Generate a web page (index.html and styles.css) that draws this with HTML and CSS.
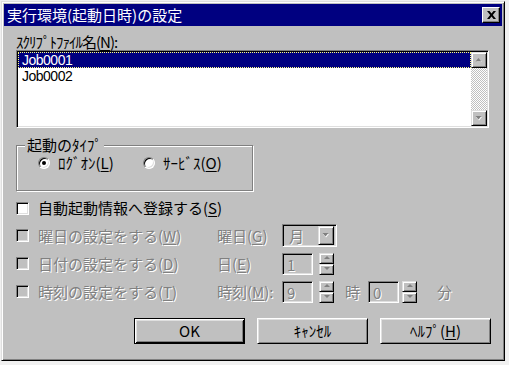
FILE: index.html
```html
<!DOCTYPE html>
<html lang="ja">
<head>
    <meta charset="UTF-8">
    <meta name="viewport" content="width=device-width, initial-scale=1.0">
    <title>実行環境(起動日時)の設定</title>
    <link rel="stylesheet" href="styles.css">
</head>
<body>
    <div class="window">
        <div class="titlebar">
            <span class="title">実行環境(起動日時)の設定</span>
            <span class="close-btn">
                <svg width="9" height="8" viewBox="0 0 9 8"><path d="M0 0h2.5l2 2.6L6.5 0H9L5.8 4 9 8H6.5l-2-2.6L2.5 8H0l3.2-4z" fill="#000"/></svg>
            </span>
        </div>
        <div class="dialog-body">
            <div class="field-label">ｽｸﾘﾌﾟﾄﾌｧｲﾙ名(<u>N</u>):</div>
            <div class="listbox">
                <ul class="list-items">
                    <li class="selected">Job0001</li>
                    <li>Job0002</li>
                </ul>
                <div class="scrollbar">
                    <span class="bevel scroll-btn">
                        <svg width="8" height="5" viewBox="0 0 8 5"><path d="M4 1l3 3H1z" fill="#fff"/><path d="M3.5 0l3 3.5h-6z" fill="#808080"/></svg>
                    </span>
                    <span class="scroll-track"></span>
                    <span class="bevel scroll-btn">
                        <svg width="8" height="5" viewBox="0 0 8 5"><path d="M1 1h6L4 4.5z" fill="#fff"/><path d="M0.5 0h6l-3 3.5z" fill="#808080"/></svg>
                    </span>
                </div>
            </div>

            <div class="group">
                <div class="group-title">起動のﾀｲﾌﾟ</div>
                <div class="radio-row">
                    <label class="radio-item logon"><span class="radio checked"></span><span>ﾛｸﾞｵﾝ(<u>L</u>)</span></label>
                    <label class="radio-item"><span class="radio"></span><span>ｻｰﾋﾞｽ(<u>O</u>)</span></label>
                </div>
            </div>

            <label class="check-row"><span class="checkbox"></span><span>自動起動情報へ登録する(<u>S</u>)</span></label>

            <div class="schedule">
                <div class="check-cell"><span class="checkbox off"></span><span class="disabled">曜日の設定をする(<u>W</u>)</span></div>
                <div class="disabled">曜日(<u>G</u>)</div>
                <div class="controls">
                    <div class="sunken combo">
                        <span class="disabled">月</span>
                        <span class="bevel drop-btn">
                            <svg width="8" height="5" viewBox="0 0 8 5"><path d="M1 1h6L4 4.5z" fill="#fff"/><path d="M0.5 0h6l-3 3.5z" fill="#808080"/></svg>
                        </span>
                    </div>
                </div>

                <div class="check-cell"><span class="checkbox off"></span><span class="disabled">日付の設定をする(<u>D</u>)</span></div>
                <div class="disabled">日(<u>E</u>)</div>
                <div class="controls">
                    <div class="sunken edit disabled">1</div>
                    <div class="spin gap-wide">
                        <span class="bevel spin-btn"><svg width="6" height="4" viewBox="0 0 6 4"><path d="M3 0l3 3H0z" fill="#808080"/></svg></span>
                        <span class="bevel spin-btn"><svg width="6" height="4" viewBox="0 0 6 4"><path d="M0 0h6L3 3z" fill="#808080"/></svg></span>
                    </div>
                </div>

                <div class="check-cell"><span class="checkbox off"></span><span class="disabled">時刻の設定をする(<u>T</u>)</span></div>
                <div class="disabled">時刻(<u>M</u>):</div>
                <div class="controls">
                    <div class="sunken edit disabled">9</div>
                    <div class="spin gap-wide">
                        <span class="bevel spin-btn"><svg width="6" height="4" viewBox="0 0 6 4"><path d="M3 0l3 3H0z" fill="#808080"/></svg></span>
                        <span class="bevel spin-btn"><svg width="6" height="4" viewBox="0 0 6 4"><path d="M0 0h6L3 3z" fill="#808080"/></svg></span>
                    </div>
                    <span class="disabled unit-hour">時</span>
                    <div class="sunken edit disabled">0</div>
                    <div class="spin gap-narrow">
                        <span class="bevel spin-btn"><svg width="6" height="4" viewBox="0 0 6 4"><path d="M3 0l3 3H0z" fill="#808080"/></svg></span>
                        <span class="bevel spin-btn"><svg width="6" height="4" viewBox="0 0 6 4"><path d="M0 0h6L3 3z" fill="#808080"/></svg></span>
                    </div>
                    <span class="disabled unit-min">分</span>
                </div>
            </div>

            <div class="buttons">
                <button class="btn default">OK</button>
                <button class="btn">ｷｬﾝｾﾙ</button>
                <button class="btn">ﾍﾙﾌﾟ(<u>H</u>)</button>
            </div>
        </div>
    </div>
</body>
</html>
```

FILE: styles.css
```css
body {
    margin: 0;
    background-color: #f0f0f0;
    font-family: "Noto Sans CJK JP", "Noto Sans", sans-serif;
    font-size: 15px;
    line-height: 16px;
    color: #000;
}

u {
    text-decoration-thickness: 1px;
    text-underline-offset: 2px;
}

.window {
    margin: 1px 0 0 1px;
    width: 504px;
    height: 360px;
    box-sizing: border-box;
    padding: 2px;
    background-color: #c0c0c0;
    border: 1px solid;
    border-color: #dfdfdf #000 #000 #dfdfdf;
    box-shadow: inset 1px 1px #fff, inset -1px -1px #808080;
}

/* shared 3d looks */
.bevel {
    box-sizing: border-box;
    background-color: #c0c0c0;
    border: 1px solid;
    border-color: #dfdfdf #000 #000 #dfdfdf;
    box-shadow: inset 1px 1px #fff, inset -1px -1px #808080;
    display: flex;
    align-items: center;
    justify-content: center;
}

.sunken {
    box-sizing: border-box;
    border: 1px solid;
    border-color: #808080 #fff #fff #808080;
    box-shadow: inset 1px 1px #000, inset -1px -1px #dfdfdf;
}

.disabled {
    color: #808080;
    text-shadow: 1px 1px 0 #fff;
}

/* title bar */
.titlebar {
    height: 22px;
    background-color: #000080;
    display: flex;
    align-items: center;
    justify-content: space-between;
    padding: 0 2px 0 3px;
}

.title {
    color: #fff;
    font-size: 15px;
    line-height: 20px;
}

.close-btn {
    width: 18px;
    height: 16px;
    box-sizing: border-box;
    background-color: #c0c0c0;
    border: 1px solid;
    border-color: #fff #000 #000 #fff;
    box-shadow: inset -1px -1px #808080;
    display: flex;
    align-items: center;
    justify-content: center;
}

.dialog-body {
    padding: 8px 11px 0 12px;
}

/* script list */
.field-label {
    height: 16px;
    letter-spacing: -1px;
}

.listbox {
    display: flex;
    width: 473px;
    height: 78px;
    padding: 1px;
    background-color: #fff;
    box-sizing: border-box;
    border: 1px solid;
    border-color: #808080 #fff #fff #808080;
    box-shadow: inset 1px 1px #000, inset -1px -1px #dfdfdf;
}

.list-items {
    flex: 1;
    margin: 0;
    padding: 0;
    list-style: none;
    font-family: "Liberation Sans", Arial, sans-serif;
    font-size: 14px;
    letter-spacing: -0.5px;
}

.list-items li {
    height: 16px;
    line-height: 16px;
    padding-left: 4px;
}

.list-items .selected {
    background-color: #000080;
    color: #fff;
    outline: 1px dotted #ffff80;
    outline-offset: -1px;
}

.scrollbar {
    width: 16px;
    display: flex;
    flex-direction: column;
}

.scroll-btn {
    height: 16px;
}

.scroll-track {
    flex: 1;
    background: repeating-conic-gradient(#c0c0c0 0% 25%, #fff 0% 50%) 0 0 / 2px 2px;
}

/* startup type group */
.group {
    width: 237px;
    height: 46px;
    margin-top: 17px;
    box-sizing: border-box;
    border: 1px solid #808080;
    box-shadow: inset 1px 1px #fff, 1px 1px #fff;
}

.group-title {
    width: fit-content;
    margin: -9px 0 0 8px;
    padding: 0 2px;
    background-color: #c0c0c0;
    line-height: 16px;
}

.radio-row {
    display: flex;
    margin-top: 2px;
    padding-left: 21px;
    height: 16px;
}

.radio-item {
    display: flex;
    align-items: center;
    gap: 8px;
}

.radio-item.logon {
    width: 105px;
}

.radio {
    width: 12px;
    height: 12px;
    box-sizing: border-box;
    border-radius: 50%;
    background-color: #fff;
    border: 1px solid;
    border-color: #808080 #fff #fff #808080;
    box-shadow: inset 1px 1px #000, inset -1px -1px #dfdfdf;
    display: flex;
    align-items: center;
    justify-content: center;
}

.radio.checked::after {
    content: "";
    width: 4px;
    height: 4px;
    border-radius: 50%;
    background-color: #000;
}

/* checkboxes */
.check-row {
    display: flex;
    align-items: center;
    gap: 9px;
    height: 16px;
    margin-top: 9px;
}

.checkbox {
    width: 13px;
    height: 13px;
    flex-shrink: 0;
    box-sizing: border-box;
    background-color: #fff;
    border: 1px solid;
    border-color: #808080 #fff #fff #808080;
    box-shadow: inset 1px 1px #000, inset -1px -1px #dfdfdf;
}

.checkbox.off {
    background-color: #c0c0c0;
}

/* schedule rows */
.schedule {
    display: grid;
    grid-template-columns: 201px 65px auto;
    grid-template-rows: 23px 23px 23px;
    row-gap: 5px;
    align-items: center;
    margin-top: 8px;
}

.check-cell {
    display: flex;
    align-items: center;
    gap: 9px;
}

.controls {
    display: flex;
    align-items: center;
    height: 23px;
}

.combo {
    width: 55px;
    height: 23px;
    display: flex;
    align-items: center;
    padding: 2px 2px 2px 6px;
    background-color: #c0c0c0;
}

.drop-btn {
    width: 16px;
    height: 19px;
    margin-left: auto;
}

.edit {
    width: 31px;
    height: 22px;
    padding: 2px 0 0 4px;
    background-color: #c0c0c0;
    line-height: 17px;
}

.spin {
    width: 15px;
    height: 22px;
    display: flex;
    flex-direction: column;
}

.spin.gap-wide {
    margin-left: 6px;
}

.spin.gap-narrow {
    margin-left: 3px;
}

.spin-btn {
    flex: 1;
}

.unit-hour {
    margin: 0 8px 0 11px;
}

.unit-min {
    margin-left: 20px;
}

/* bottom buttons */
.buttons {
    display: flex;
    justify-content: flex-end;
    gap: 12px;
    margin-top: 15px;
}

.btn {
    width: 111px;
    height: 26px;
    padding: 0;
    font: inherit;
    color: #000;
    background-color: #c0c0c0;
    border: 1px solid;
    border-color: #fff #000 #000 #fff;
    box-shadow: inset 1px 1px #dfdfdf, inset -1px -1px #808080;
}

.btn.default {
    border-color: #000;
    box-shadow: inset 1px 1px #fff, inset -1px -1px #000, inset 2px 2px #dfdfdf, inset -2px -2px #808080;
}
```
